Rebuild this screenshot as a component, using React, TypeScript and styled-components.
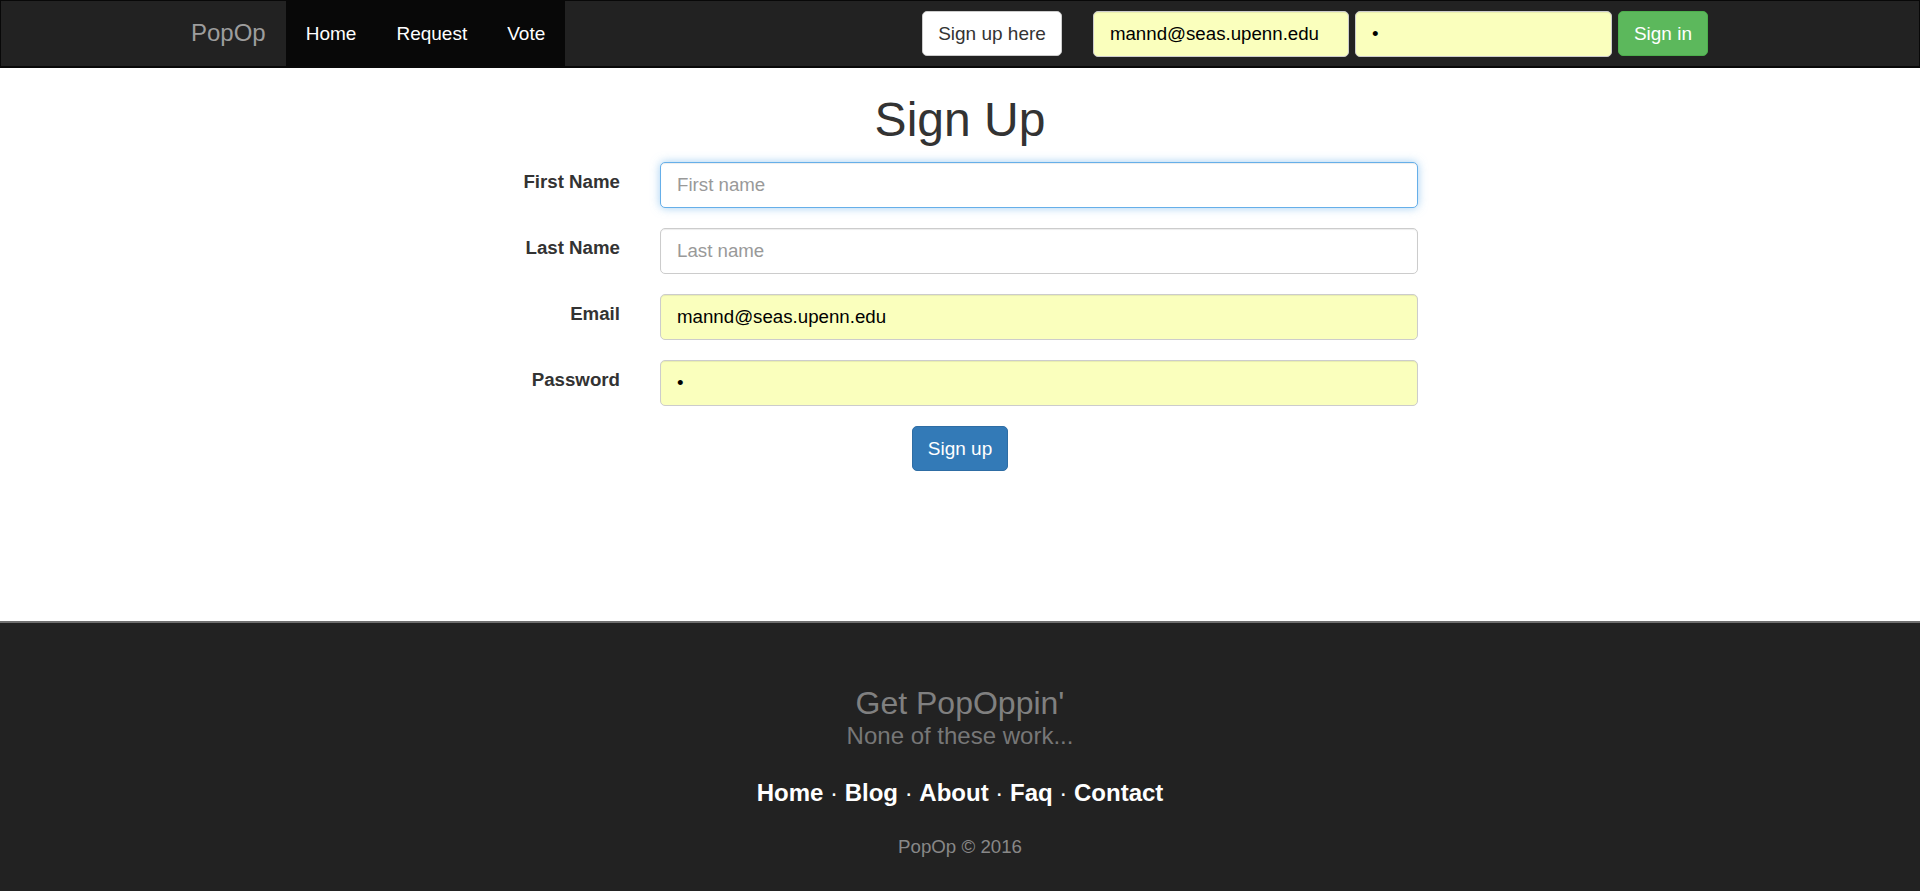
import styled, { createGlobalStyle } from "styled-components";

const GlobalStyle = createGlobalStyle`
  html, body {
    margin: 0;
    padding: 0;
    background: #fff;
  }
  body {
    font-family: "Liberation Sans", Arial, Helvetica, sans-serif;
    font-size: 18.7px;
    line-height: 1.42857;
    color: #333;
  }
  * {
    box-sizing: border-box;
  }
`;

export default function App() {
  return (
    <>
      <GlobalStyle />
      <Navbar>
        <Brand href="#">PopOp</Brand>
        <NavLinks>
          <NavLink href="#">Home</NavLink>
          <NavLink href="#">Request</NavLink>
          <NavLink href="#">Vote</NavLink>
        </NavLinks>
        <NavRight>
          <Button $variant="default">Sign up here</Button>
          <NavForm>
            <Input $width={256} $autofill type="email" defaultValue="mannd@seas.upenn.edu" />
            <Input $width={257} $autofill type="password" defaultValue="1" />
            <Button $variant="success">Sign in</Button>
          </NavForm>
        </NavRight>
      </Navbar>

      <Main>
        <PageTitle>Sign Up</PageTitle>
        <Form>
          <FormRow>
            <Label>First Name</Label>
            <Input $focused autoFocus type="text" placeholder="First name" />
          </FormRow>
          <FormRow>
            <Label>Last Name</Label>
            <Input type="text" placeholder="Last name" />
          </FormRow>
          <FormRow>
            <Label>Email</Label>
            <Input $autofill type="email" defaultValue="mannd@seas.upenn.edu" />
          </FormRow>
          <FormRow>
            <Label>Password</Label>
            <Input $autofill type="password" defaultValue="1" />
          </FormRow>
          <Submit>
            <Button $variant="primary">Sign up</Button>
          </Submit>
        </Form>
      </Main>

      <Footer>
        <FooterTitle>Get PopOppin'</FooterTitle>
        <FooterSub>None of these work...</FooterSub>
        <FooterLinks>
          <a href="#">Home</a> · <a href="#">Blog</a> · <a href="#">About</a> ·{" "}
          <a href="#">Faq</a> · <a href="#">Contact</a>
        </FooterLinks>
        <Copyright>PopOp © 2016</Copyright>
      </Footer>
    </>
  );
}

const Navbar = styled.nav`
  display: flex;
  align-items: stretch;
  height: 68px;
  padding: 0 211px 0 170px;
  background: #222;
  border: 1px solid #080808;
  border-bottom-width: 2px;
`;

const Brand = styled.a`
  display: flex;
  align-items: center;
  padding: 0 20px;
  font-size: 24px;
  color: #9d9d9d;
  text-decoration: none;
`;

const NavLinks = styled.div`
  display: flex;
`;

const NavLink = styled.a`
  display: flex;
  align-items: center;
  padding: 0 20px;
  font-size: 19px;
  background: #080808;
  color: #fff;
  text-decoration: none;
`;

const NavRight = styled.div`
  display: flex;
  align-items: center;
  gap: 31px;
  margin-left: auto;
`;

const NavForm = styled.form`
  display: flex;
  align-items: center;
  gap: 6px;
  margin: 0;
`;

const Input = styled.input<{ $width?: number; $autofill?: boolean; $focused?: boolean }>`
  display: block;
  width: ${(p) => (p.$width ? `${p.$width}px` : "100%")};
  height: 46px;
  padding: 0 16px;
  font-family: inherit;
  font-size: 18.7px;
  color: ${(p) => (p.$autofill ? "#000" : "#555")};
  background: ${(p) => (p.$autofill ? "#faffbd" : "#fff")};
  border: 1px solid ${(p) => (p.$focused ? "#66afe9" : "#ccc")};
  border-radius: 5px;
  box-shadow: inset 0 1px 1px rgba(0, 0, 0, 0.075)
    ${(p) => (p.$focused ? ", 0 0 10px rgba(102, 175, 233, 0.6)" : "")};
  outline: none;

  &::placeholder {
    color: #999;
  }
`;

const Button = styled.button<{ $variant: "default" | "primary" | "success" }>`
  display: inline-block;
  height: 45px;
  padding: 0 15px;
  font-family: inherit;
  font-size: 19px;
  line-height: 1;
  border-radius: 5px;
  border: 1px solid;
  cursor: pointer;
  color: ${(p) => (p.$variant === "default" ? "#333" : "#fff")};
  background: ${(p) =>
    p.$variant === "primary" ? "#337ab7" : p.$variant === "success" ? "#5cb85c" : "#fff"};
  border-color: ${(p) =>
    p.$variant === "primary" ? "#2e6da4" : p.$variant === "success" ? "#4cae4c" : "#ccc"};
`;

const Main = styled.main`
  min-height: 553px;
  padding-top: 26px;
`;

const PageTitle = styled.h1`
  margin: 0 0 15px;
  font-size: 48px;
  font-weight: 500;
  line-height: 1.1;
  text-align: center;
  color: #333;
`;

const Form = styled.form`
  width: 916px;
  margin: 0 auto;
`;

const FormRow = styled.div`
  display: grid;
  grid-template-columns: 118px 1fr;
  column-gap: 40px;
  margin-bottom: 20px;
`;

const Label = styled.label`
  padding-top: 7px;
  font-weight: bold;
  text-align: right;
  color: #333;
`;

const Submit = styled.div`
  display: flex;
  justify-content: center;
`;

const Footer = styled.footer`
  min-height: 270px;
  padding: 61px 0 40px;
  background: #222;
  border-top: 2px solid #707070;
  text-align: center;
`;

const FooterTitle = styled.h3`
  margin: 0;
  font-size: 32px;
  font-weight: 400;
  line-height: 38px;
  color: #808080;
`;

const FooterSub = styled.p`
  margin: 0;
  font-size: 24px;
  line-height: 28px;
  color: #777;
`;

const FooterLinks = styled.p`
  margin: 29px 0 0;
  font-size: 24px;
  line-height: 28px;
  color: #fff;

  a {
    font-weight: bold;
    color: #fff;
    text-decoration: none;
  }
`;

const Copyright = styled.p`
  margin: 27px 0 0;
  font-size: 18.7px;
  line-height: 26px;
  color: #888;
`;
